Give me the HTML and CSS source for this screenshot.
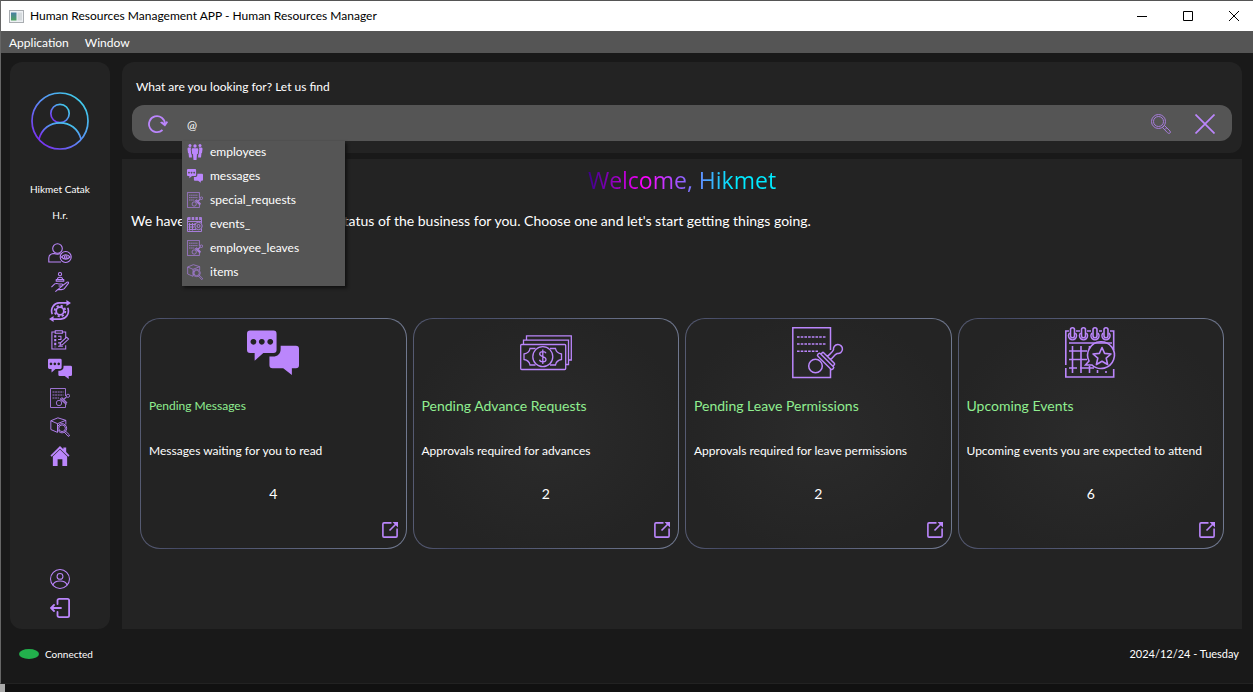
FILE: index.html
```html
<!DOCTYPE html>
<html lang="en">
<head>
<meta charset="utf-8">
<title>Human Resources Management APP - Human Resources Manager</title>
<link rel="stylesheet" href="styles.css">
</head>
<body>
<svg class="sprite" aria-hidden="true">
  <defs>
    <linearGradient id="avatar-stroke" x1="0" y1="1" x2="1" y2="0">
      <stop offset="0.1" stop-color="#7b2cf0"/><stop offset="0.5" stop-color="#5a8df5"/><stop offset="0.9" stop-color="#3fd0ea"/>
    </linearGradient>
    <symbol id="i-chat" viewBox="0 0 51 44">
      <path fill="currentColor" fill-rule="evenodd" d="M3 0H26a3 3 0 0 1 3 3V19a3 3 0 0 1-3 3H16L7.500 29.500V22H3a3 3 0 0 1-3-3V3a3 3 0 0 1 3-3ZM6.300 8.200a2.800 2.800 0 1 0 .01 0ZM14.500 8.200a2.800 2.800 0 1 0 .01 0ZM22.800 8.200a2.800 2.800 0 1 0 .01 0Z"/>
      <path fill="currentColor" d="M33 15H48a3 3 0 0 1 3 3V34a3 3 0 0 1-3 3H44V43.500L35.500 37H25a3 3 0 0 1-3-3V25.500H25.500C30 25.500 33 22.500 33 18Z"/>
    </symbol>
    <symbol id="i-money" viewBox="0 0 52 36">
      <g fill="none" stroke="currentColor" stroke-width="1.300">
        <rect x=".7" y="9.500" width="45" height="25" rx="1"/>
        <path d="M3.500 9V5.200H48.500V29.500H46M6.500 5V.8H51.300V25H48.500"/>
        <circle cx="22.800" cy="21.700" r="10"/>
        <path d="M15.500 13.500H10C9.500 17 7 18.500 4 19V24.500C7 25 9.500 27 10 30H15.500M30 13.500H35.500C36 17 38.500 18.500 41.500 19V24.500C38.500 25 36 27 35.500 30H30"/>
        <path d="M26 18.300C25 15.800 19.700 16 19.700 19 19.700 22.200 26 21 26 24.400 26 27.600 20.300 27.600 19.500 24.800M22.800 14.500V29"/>
      </g>
    </symbol>
    <symbol id="i-stamp" viewBox="0 0 52 52">
      <g fill="none" stroke="currentColor" stroke-width="1.500">
        <path d="M38.500 23V.8H.8V50.500H38.500V42"/>
        <path stroke-dasharray="2.600 1.100" d="M5 10H34.500M5 17H34.500M5 24.300H26"/>
        <circle cx="23.500" cy="39" r="6.800"/>
        <g transform="translate(34.500 33.500) rotate(45)">
          <rect x="-10.500" y="-.5" width="21" height="3.600" rx="1.500"/>
          <path d="M-8.500-.5V-2.500Q-8.500-3.500-7.500-3.500H7.500Q8.500-3.500 8.500-2.500V-.5M-2.300-3.500C-2.300-8-1.600-10-2.600-12.500A4.500 4.500 0 1 1 2.600-12.500C1.600-10 2.300-8 2.300-3.500"/>
        </g>
      </g>
    </symbol>
    <symbol id="i-stamp-small" viewBox="0 0 20 20">
      <g fill="none" stroke="currentColor" stroke-width="1">
        <path d="M15.500 8V.5H.5V19.500H15.500V16"/>
        <path stroke-dasharray="2 .6" d="M2.500 4H13.500M2.500 7H13.500M2.500 10H9"/>
        <circle cx="9" cy="15" r="2.700"/>
        <path stroke-width="1.400" d="M10 10.500 16.500 16.500M11.500 9.500 17 15M13.500 11.500 16.500 9"/><circle cx="18" cy="7.800" r="1.600"/>
      </g>
    </symbol>
    <symbol id="i-calendar" viewBox="0 0 52 52">
      <g fill="none" stroke="currentColor" stroke-width="1.600">
        <path d="M4 4H.8V38M.8 41V50H48.700V42M11 4H15M22 4H26M34 4H37M45 4H48.700V23M4 16H47"/>
        <g>
          <rect x="5.500" y=".8" width="4" height="10" rx="2"/><path d="M4.600 6a4 4 0 1 0 5.800 0"/>
          <rect x="16.500" y=".8" width="4" height="10" rx="2"/><path d="M15.600 6a4 4 0 1 0 5.800 0"/>
          <rect x="28" y=".8" width="4" height="10" rx="2"/><path d="M27.100 6a4 4 0 1 0 5.800 0"/>
          <rect x="39" y=".8" width="4" height="10" rx="2"/><path d="M38.100 6a4 4 0 1 0 5.800 0"/>
        </g>
        <path d="M7.500 19V46M16 19V46M24.500 19V22M24.500 39V46M32.500 43V46M41 44V46M4 24H22M4 32.500H22M4 41H12M15 41H29"/>
        <path d="M24 34L20.500 38H27A13.400 13.400 0 1 0 24 34Z"/>
        <path stroke-linejoin="round" d="M37 20.500 39.600 26.400 46 27 41.200 31.200 42.600 37.500 37 34.200 31.400 37.500 32.800 31.200 28 27 34.400 26.400Z"/>
      </g>
    </symbol>
    <symbol id="i-calendar-small" viewBox="0 0 16 16">
      <g fill="none" stroke="currentColor" stroke-width="1">
        <path d="M.5 1.500V15.500H14.500V13M14.500 7V1.500M.5 5.500H15"/><path stroke-width="3" stroke-dasharray="2.500 1.200" d="M1 2.500H15"/>
        <path d="M2.500 7V14.500M5.500 7V14.500M8 7V9M1.500 8.500H8M1.500 11H7M1.500 13.500H9"/><circle cx="11.500" cy="10" r="3.700"/><circle cx="11.500" cy="10" r="1.500"/>
      </g>
    </symbol>
    <symbol id="i-box" viewBox="0 0 24 24">
      <g fill="none" stroke="currentColor" stroke-width="1.100" stroke-linejoin="round">
        <path d="M9 18.500 1 15V4.500L9.500 1 19 4V9M1 4.500 9 8V18.500M9 8 19 4"/>
        <circle cx="14.500" cy="13.500" r="5.500"/><circle cx="14.500" cy="13.500" r="4"/>
        <path d="M17.500 18.500 19 17.300 23.300 21.500Q23.500 23.300 21.800 23.200Z"/>
      </g>
    </symbol>
    <symbol id="i-usereye" viewBox="0 0 24 20">
      <g fill="none" stroke="currentColor" stroke-width="1.100">
        <circle cx="9.500" cy="5.500" r="4.800"/>
        <path d="M13 19H.8V15Q1 10.800 6 10.500Q9.500 12 12.500 10.500"/>
        <circle cx="17.700" cy="14" r="5.500"/>
        <path d="M13.500 14Q17.700 9.500 22 14Q17.700 18.500 13.500 14Z"/><circle cx="17.700" cy="14" r="1.300"/>
      </g>
    </symbol>
    <symbol id="i-hand" viewBox="0 0 20 21">
      <g fill="none" stroke="currentColor" stroke-width="1.100" stroke-linejoin="round">
        <circle cx="10" cy="2.300" r="1.700"/><path d="M7.500 7.500V6.500Q10 4.500 12.500 6.500V7.500M6 9.800V8H14V9.800Z"/>
        <path d="M1 16 4.500 12.500Q6.500 11.500 8.500 12.500H12Q13.800 13.500 12 14.700H8.500M13 14 17.300 10.800Q19.500 10 18.800 12L14.500 17.500Q13.500 18.500 11.500 18.500H7.500L5.500 20.300Z"/>
      </g>
    </symbol>
    <symbol id="i-gear" viewBox="0 0 24 24">
      <g fill="none" stroke="currentColor">
        <circle cx="12" cy="12" r="4.200" stroke-width="2"/>
        <circle cx="12" cy="12" r="5.800" stroke-width="2" stroke-dasharray="2.400 2.155"/>
        <path stroke-width="1.800" d="M3.500 15.500C1 8.500 6 3.200 11 3.200H20M20.500 8.500C23 15.500 18 20.800 13 20.800H4"/>
      </g>
      <path fill="currentColor" d="M19 0 24 3.200 19 6.500ZM5 17.500 0 20.800 5 24Z"/>
    </symbol>
    <symbol id="i-clipboard" viewBox="0 0 20 21">
      <g fill="none" stroke="currentColor" stroke-width="1.100">
        <path d="M16 9V2H12.500M5 2H1.500V20H16V16"/><rect x="5" y=".8" width="7.500" height="2.600"/>
        <path stroke-dasharray="2.400 1.600" stroke-width="2.200" d="M5 5.500V18"/><path d="M8 6.500H11V10H8M8 13.500H10.500M8 17H13"/>
        <path d="M10 16 10.500 13.500 17 7.500 19 9.500 12.500 15.500Z"/>
      </g>
    </symbol>
    <symbol id="i-home" viewBox="0 0 20 21">
      <path fill="currentColor" d="M10 0 13.500 3.300V1.500H16.500V6.300L20 10 18.700 11.300 10 3 1.300 11.300 0 10Z"/>
      <path fill="currentColor" d="M10 3.800 17.500 11V21H12.500V14H7.500V21H2.500V11Z"/>
    </symbol>
    <symbol id="i-user" viewBox="0 0 58 58">
      <g fill="none" stroke="currentColor">
        <circle cx="29" cy="29" r="27.500"/><circle cx="29" cy="21.500" r="8.500"/>
        <path d="M8 47C11 38.500 19 35 29 35S47 38.500 50 47"/>
      </g>
    </symbol>
    <symbol id="i-exit" viewBox="0 0 20 20">
      <g fill="none" stroke="currentColor" stroke-width="1.800" stroke-linecap="round">
        <path d="M7.500 6V2.500Q7.500.9 9.200.9H17.500Q19.100.9 19.100 2.500V17.500Q19.100 19.100 17.500 19.100H9.200Q7.500 19.100 7.500 17.500V14"/>
        <path d="M11 10H1M4 7 1 10 4 13"/>
      </g>
    </symbol>
    <symbol id="i-people" viewBox="0 0 16 16">
      <g fill="currentColor">
        <circle cx="8" cy="2" r="1.700"/><circle cx="3" cy="1.500" r="1.500"/><circle cx="13" cy="1.500" r="1.500"/>
        <path d="M5.500 4.200H10.500Q11.500 4.500 11.300 6L10.800 10H10L9.500 16H6.500L6 10H5.200L4.700 6Q4.500 4.500 5.500 4.200ZM1.500 3.500H4.200L3.700 5 4.300 10.500H4.800L4.900 13.500H2L1.500 9H1L.5 5Q.4 3.700 1.500 3.500ZM14.500 3.500H11.800L12.300 5 11.700 10.500H11.200L11.100 13.500H14L14.500 9H15L15.500 5Q15.600 3.700 14.500 3.500Z"/>
      </g>
    </symbol>
    <symbol id="i-refresh" viewBox="0 0 20 18">
      <path fill="none" stroke="currentColor" stroke-width="1.800" d="M14.500 15A8 8 0 1 1 17 9"/>
      <path fill="currentColor" d="M12 7.500 14 6.500 16.800 8.500 18.800 6 20 7.300 17 11.500Z"/>
    </symbol>
    <symbol id="i-search" viewBox="0 0 20 20">
      <g fill="none" stroke="currentColor">
        <circle cx="7.500" cy="7.500" r="7"/><circle cx="7.500" cy="7.500" r="5"/>
        <path d="M11.500 13.500 13.500 11.500 19 17Q20 18.500 18.800 19.200 17.800 19.800 16.500 18.700ZM14 15.500 15.500 14"/>
      </g>
    </symbol>
    <symbol id="i-clear" viewBox="0 0 20 20"><path fill="none" stroke="currentColor" stroke-width="1.700" d="M.5.500 19.500 19.500M19.500.5.500 19.500"/></symbol>
    <symbol id="i-open" viewBox="0 0 16 16">
      <path fill="none" stroke="currentColor" stroke-width="1.600" d="M9.500.9H2Q.9.900.9 2V14Q.9 15.100 2 15.100H14Q15.100 15.100 15.100 14V6.500M7.500 8.500 15 1"/>
      <path fill="currentColor" d="M10.500 0H16V5.500Z"/>
    </symbol>
  </defs>
</svg>

<div class="window">
  <header class="titlebar">
    <svg class="app-icon" viewBox="0 0 15 13" aria-hidden="true"><defs><linearGradient id="app-fill" x2="0" y2="1"><stop stop-color="#4a7fa5"/><stop offset="1" stop-color="#4fa35f"/></linearGradient></defs><rect x=".5" y=".5" width="14" height="12" fill="#eef1f4" stroke="#a9adb1"/><rect x="2" y="2.500" width="5.500" height="8" fill="url(#app-fill)"/><rect x="8.500" y="2.500" width="4.500" height="8" fill="#d5dadd"/></svg>
    <span class="window-title">Human Resources Management APP - Human Resources Manager</span>
    <div class="window-controls">
      <button type="button" aria-label="Minimize"><svg viewBox="0 0 10 10"><path d="M0 5.500H10"/></svg></button>
      <button type="button" aria-label="Maximize"><svg viewBox="0 0 10 10"><path d="M.5.500H9.500V9.500H.5Z"/></svg></button>
      <button type="button" aria-label="Close"><svg viewBox="0 0 10 10"><path d="M0 0 10 10M10 0 0 10"/></svg></button>
    </div>
  </header>
  <nav class="menubar" aria-label="Main menu"><button type="button">Application</button><button type="button">Window</button></nav>

  <div class="workspace">
    <aside class="sidebar">
      <svg class="avatar" viewBox="0 0 58 58" aria-hidden="true"><g fill="none" stroke="url(#avatar-stroke)" stroke-width="1.700"><circle cx="29" cy="29" r="28"/><circle cx="29" cy="21.500" r="9.200"/><path d="M8 47C11 36.500 19 30.800 29 30.800S47 36.500 50 47"/></g></svg>
      <p class="user-name">Hikmet Catak</p>
      <p class="user-role">H.r.</p>
      <nav class="side-nav" aria-label="Sections">
        <button type="button" aria-label="Employees"><svg class="wide"><use href="#i-usereye"/></svg></button>
        <button type="button" aria-label="Advances"><svg><use href="#i-hand"/></svg></button>
        <button type="button" aria-label="Operations"><svg class="wide"><use href="#i-gear"/></svg></button>
        <button type="button" aria-label="Tasks"><svg><use href="#i-clipboard"/></svg></button>
        <button type="button" aria-label="Messages"><svg class="wide"><use href="#i-chat"/></svg></button>
        <button type="button" aria-label="Requests"><svg class="dense"><use href="#i-stamp-small"/></svg></button>
        <button type="button" aria-label="Items"><svg><use href="#i-box"/></svg></button>
        <button type="button" aria-label="Home"><svg><use href="#i-home"/></svg></button>
      </nav>
      <nav class="side-nav side-nav-end" aria-label="Account">
        <button type="button" aria-label="Profile"><svg class="profile"><use href="#i-user"/></svg></button>
        <button type="button" aria-label="Log out"><svg><use href="#i-exit"/></svg></button>
      </nav>
    </aside>

    <main class="main">
      <section class="search-panel">
        <label for="search">What are you looking for? Let us find</label>
        <div class="search-bar">
          <button type="button" aria-label="Refresh"><svg><use href="#i-refresh"/></svg></button>
          <div class="search-field">
            <input id="search" type="text" value="@" autocomplete="off">
            <ul class="suggestions">
              <li><svg><use href="#i-people"/></svg>employees</li>
              <li><svg><use href="#i-chat"/></svg>messages</li>
              <li><svg class="dense"><use href="#i-stamp-small"/></svg>special_requests</li>
              <li><svg class="dense"><use href="#i-calendar-small"/></svg>events_</li>
              <li><svg class="dense"><use href="#i-stamp-small"/></svg>employee_leaves</li>
              <li><svg class="dense"><use href="#i-box"/></svg>items</li>
            </ul>
          </div>
          <button type="button" aria-label="Search"><svg class="dense"><use href="#i-search"/></svg></button>
          <button type="button" aria-label="Clear"><svg><use href="#i-clear"/></svg></button>
        </div>
      </section>

      <section class="dashboard">
        <h1><span>Welcome, Hikmet</span></h1>
        <p class="intro">We have summarized the current status of the business for you. Choose one and let's start getting things going.</p>
        <div class="cards">
          <article class="card card-plain">
            <svg class="card-icon"><use href="#i-chat"/></svg>
            <h2 class="small">Pending Messages</h2><p>Messages waiting for you to read</p><strong>4</strong>
            <button type="button" aria-label="Open messages"><svg><use href="#i-open"/></svg></button>
          </article>
          <article class="card">
            <svg class="card-icon"><use href="#i-money"/></svg>
            <h2>Pending Advance Requests</h2><p>Approvals required for advances</p><strong>2</strong>
            <button type="button" aria-label="Open advance requests"><svg><use href="#i-open"/></svg></button>
          </article>
          <article class="card">
            <svg class="card-icon"><use href="#i-stamp"/></svg>
            <h2>Pending Leave Permissions</h2><p>Approvals required for leave permissions</p><strong>2</strong>
            <button type="button" aria-label="Open leave permissions"><svg><use href="#i-open"/></svg></button>
          </article>
          <article class="card">
            <svg class="card-icon"><use href="#i-calendar"/></svg>
            <h2>Upcoming Events</h2><p>Upcoming events you are expected to attend</p><strong>6</strong>
            <button type="button" aria-label="Open events"><svg><use href="#i-open"/></svg></button>
          </article>
        </div>
      </section>
    </main>
  </div>

  <footer class="statusbar"><span class="status-dot"></span><span class="status-text">Connected</span><time datetime="2024-12-24">2024/12/24 - Tuesday</time></footer>
</div>
<div class="window-edge"></div>
</body>
</html>
```
FILE: styles.css
```css
* { box-sizing: border-box; }
body {
  margin: 0;
  min-height: 100vh;
  display: flex;
  flex-direction: column;
  background: #111;
  color: #fff;
  font-family: Lato, "Open Sans", sans-serif;
  font-size: 12px;
  line-height: 20px;
}
h1, h2, p, ul { margin: 0; padding: 0; font-weight: 400; }
button { display: flex; align-items: center; justify-content: center; margin: 0; padding: 0; border: 0; background: none; color: inherit; font: inherit; }
.sprite { position: absolute; width: 0; height: 0; }

.window { flex: 1; display: flex; flex-direction: column; border-top: 1px solid #555; border-left: 1px solid #666; border-bottom: 1px solid #222; background: #191919; }
.titlebar { display: flex; align-items: center; height: 30px; padding-left: 8px; background: #fff; color: #000; }
.app-icon { width: 15px; height: 13px; margin-right: 6px; }
.window-controls { display: flex; gap: 8px; margin-left: auto; }
.window-controls button { width: 38px; height: 30px; }
.window-controls svg { width: 10px; height: 10px; fill: none; stroke: #000; overflow: visible; }
.menubar { display: flex; gap: 16px; height: 22px; padding: 0 8px; background: #555; }
.menubar button { height: 24px; }

.workspace { flex: 1; display: grid; grid-template-columns: 100px 1fr; gap: 12px; padding: 9px 11px 0 9px; }
.sidebar { display: flex; flex-direction: column; align-items: center; padding: 30px 0 7px; border-radius: 12px; background: #232323; color: #bb86fc; }
.avatar { width: 58px; height: 58px; margin-bottom: 29px; }
.user-name, .user-role { color: #fff; font-size: 10px; }
.user-name { margin-bottom: 6px; }
.user-role { margin-bottom: 13px; }
.side-nav button { width: 40px; height: 29px; }
.side-nav svg { width: 20px; height: 20px; }
.side-nav svg.wide { width: 24px; height: 22px; }
.side-nav-end { margin-top: auto; }
.profile { stroke-width: 3px; }
.dense { opacity: 0.8; }

.main { display: flex; flex-direction: column; gap: 6px; min-width: 0; }
.search-panel { padding: 15px 10px 12px; border-radius: 12px; background: #232323; }
.search-panel label { display: block; margin: 0 4px 8px; line-height: 20px; }
.search-bar { display: flex; align-items: center; gap: 24px; height: 36px; padding: 0 17px 0 16px; border-radius: 12px; background: #555; color: #bb86fc; }
.search-bar button { height: 22px; margin-top: 2px; }
.search-bar button svg { width: 20px; height: 20px; }
.search-field { position: relative; flex: 1; align-self: stretch; margin-left: -10px; }
.search-field input { width: 100%; height: 100%; padding: 2px 5px 0; border: 0; outline: 0; background: none; color: #fff; font: inherit; }
.suggestions { position: absolute; top: 100%; left: 0; z-index: 1; width: 163px; padding-bottom: 1px; background: #555; color: #fff; list-style: none; box-shadow: 2px 2px 3px #111; }
.suggestions li { display: flex; align-items: center; gap: 7px; height: 24px; padding: 0 5px 3px; }
.suggestions svg { width: 16px; height: 16px; color: #bb86fc; }

.dashboard { flex: 1; padding: 6px 18px 80px; background: #232323; }
h1 { text-align: center; font-family: "Open Sans", sans-serif; font-size: 23px; line-height: 30px; }
h1 span { background: linear-gradient(90deg, #3a0088, #f0f 30%, #5f90ff 60%, #00eaff 76%); -webkit-background-clip: text; background-clip: text; color: transparent; }
.intro { margin: 16px -9px 87px; font-size: 14px; }
.cards { display: grid; grid-template-columns: repeat(4, 1fr); gap: 6px; }
.card {
  display: flex;
  flex-direction: column;
  padding: 8px 8px 10px;
  border: 1px solid transparent;
  border-radius: 20px;
  background: radial-gradient(ellipse at center, #2b2b2b, #242424 75%) padding-box, linear-gradient(90deg, #565b72, #444965 15%, #70788f) border-box;
}
.card-plain { background: linear-gradient(#232323, #232323) padding-box, linear-gradient(90deg, #565b72, #444965 15%, #70788f) border-box; }
.card-icon { align-self: center; width: 52px; height: 52px; margin-bottom: 17px; color: #bb86fc; }
.card h2 { margin-bottom: 25px; color: #90ee90; font-size: 14px; line-height: 20px; }
.card h2.small { font-size: 12px; }
.card p { margin-bottom: 23px; }
.card strong { margin-bottom: 18px; text-align: center; font-size: 14px; font-weight: 400; }
.card button { align-self: flex-end; color: #bb86fc; }
.card button svg { width: 16px; height: 16px; }

.statusbar { display: flex; align-items: center; height: 54px; padding: 0 14px 4px 18px; }
.status-dot { width: 20px; height: 10px; margin-right: 6px; border-radius: 50%; background: #22b14c; }
.status-text { font-size: 10px; }
.statusbar time { margin-left: auto; font-size: 11px; }
.window-edge { height: 8px; border-left: 5px solid #aaa; }
```
